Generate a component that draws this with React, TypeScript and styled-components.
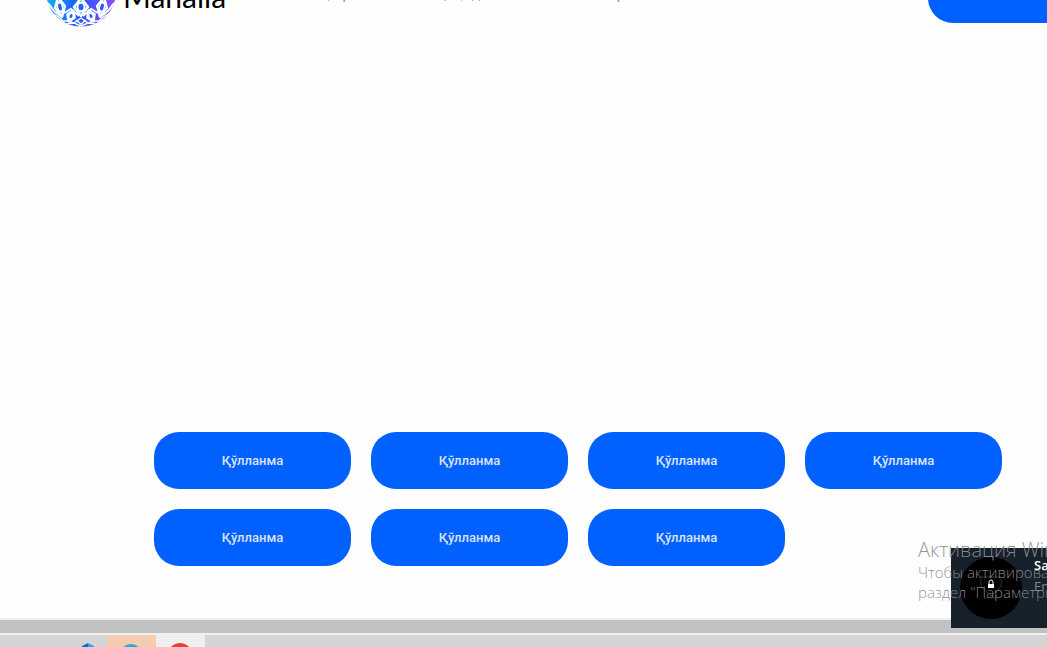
import React from "react";
import styled, { createGlobalStyle } from "styled-components";

const GlobalStyle = createGlobalStyle`
  * { box-sizing: border-box; }
  html, body { margin: 0; background: #fefefe; }
  body { font-family: Roboto, "Liberation Sans", sans-serif; }
`;

const Screen = styled.div`
  position: relative;
  min-height: 100vh;
  display: flex;
  flex-direction: column;
  overflow: hidden;
`;

const Header = styled.header`
  height: 27px;
  display: flex;
  align-items: flex-end;
  padding-left: 46px;
`;

const Brand = styled.a`
  display: flex;
  align-items: flex-end;
  gap: 7px;
  width: 224px;
  color: #000;
  text-decoration: none;
`;

const Wordmark = styled.span`
  font: 400 30px/40px Lato, sans-serif;
  padding-bottom: 11px;
`;

const Nav = styled.nav`
  flex: 1;
  display: flex;
  gap: 50px;
  padding-bottom: 25px;
`;

const NavLink = styled.a`
  font: 400 15px/20px "Open Sans", sans-serif;
  color: #888;
  text-decoration: none;
  white-space: nowrap;
`;

const PillButton = styled.button`
  height: 57px;
  border: 0;
  border-radius: 25px;
  background: #0061ff;
  color: #dbe3f8;
  font: 500 13px/20px Roboto, sans-serif;
`;

const LoginButton = styled(PillButton)`
  flex: none;
  width: 197px;
  margin: 0 -78px 4px 0;
`;

const Main = styled.main`
  flex: 1;
  display: flex;
  flex-direction: column;
  justify-content: flex-end;
  padding: 0 45px 52px 154px;
`;

const Guides = styled.div`
  display: grid;
  grid-template-columns: repeat(4, 1fr);
  gap: 20px;
`;

const ScrollTrack = styled.div`
  height: 17px;
  background: #c1c1c1;
  border: solid #f0f0f0;
  border-width: 2px 0;
`;

const Taskbar = styled.footer`
  height: 12px;
  display: flex;
  padding-left: 58px;
  background: #d5d5d5;
  overflow: hidden;
`;

const Task = styled.button<{ $tone?: string }>`
  width: 49px;
  height: 12px;
  padding: 0;
  border: 0;
  background: ${(p) => p.$tone ?? "transparent"};
  overflow: hidden;
  display: flex;
  justify-content: center;
`;

const Tray = styled(Task)`
  margin: 0 174px 0 auto;
`;

const Toast = styled.aside`
  position: absolute;
  right: 0;
  bottom: 19px;
  width: 96px;
  height: 80px;
  padding: 8px 0 8px 8px;
  display: flex;
  gap: 11px;
  background: #17212b;
  overflow: hidden;
`;

const ToastText = styled.div`
  flex: none;
  font: 400 13px/24px "Open Sans", sans-serif;
  color: #7d8791;
  white-space: nowrap;
`;

const Sender = styled.div`
  font-weight: 600;
  line-height: 18px;
  color: #fff;
`;

const Activation = styled.div`
  position: absolute;
  right: 0;
  bottom: 45px;
  width: 129px;
  overflow: hidden;
  white-space: nowrap;
  font: 300 15px/20px "Open Sans", sans-serif;
  color: rgba(142, 142, 142, 0.95);
`;

const ActivationTitle = styled.div`
  font-size: 20px;
  line-height: 24px;
`;

const Cell = ({ x, y, w, h, turn = 0 }: { x: number; y: number; w: number; h: number; turn?: number }) => (
  <g transform={`translate(${x} ${y}) rotate(${turn})`}>
    <path d={`M0 ${-h} L${w} 0 L0 ${h} L${-w} 0Z`} fill="url(#globe)" stroke="#fff" strokeWidth="2.4" strokeLinejoin="round" />
    <ellipse rx={w * 0.62} ry={h * 0.62} fill="#fff" />
    <ellipse rx={w * 0.36} ry={h * 0.36} fill="#2b5cff" />
  </g>
);

const Logo = () => (
  <svg width="70" height="70" viewBox="0 0 70 70" aria-hidden="true">
    <defs>
      <linearGradient id="globe" gradientUnits="userSpaceOnUse" x1="0" y1="35" x2="70" y2="43">
        <stop offset="0" stopColor="#12b8ff" />
        <stop offset="0.45" stopColor="#1d5cff" />
        <stop offset="1" stopColor="#8a4dff" />
      </linearGradient>
      <clipPath id="disc"><circle cx="35" cy="35" r="35" /></clipPath>
    </defs>
    <g clipPath="url(#disc)">
      <circle cx="35" cy="35" r="35" fill="url(#globe)" />
      <Cell x={14} y={50} w={5} h={10} turn={-12} />
      <Cell x={35} y={50} w={7} h={9} />
      <Cell x={56} y={50} w={5} h={10} turn={12} />
      <path
        d="M2 46 L8 54 L16 60 M68 46 L62 54 L54 60 M18 56 L25 52 L33 59 M52 56 L45 52 L37 59"
        stroke="#fff" strokeWidth="2" fill="none"
      />
      <Cell x={25} y={59} w={4} h={6} turn={24} />
      <Cell x={45} y={59} w={4} h={6} turn={-24} />
      <path
        d="M7 57 L13 60 L17 64 L22 64 L28 66 L35 61 L42 66 L48 64 L53 64 L57 60 L63 57 M14 63 L20 67 L28 66 L35 69 L42 66 L50 67 L56 63 M30 63 L35 67 L40 63"
        stroke="#fff" strokeWidth="1.4" fill="none"
      />
      <path d="M17 68 Q35 72 53 68" stroke="#fff" strokeWidth="2" strokeDasharray="2 1" fill="none" />
    </g>
  </svg>
);

const AvatarIcon = styled.svg`
  flex: none;
`;

const Avatar = () => (
  <AvatarIcon width="64" height="64" viewBox="0 0 64 64" aria-hidden="true">
    <circle cx="32" cy="32" r="31" fill="#000" />
    <path d="M22 23 Q20 31 27 35 L32 40 L37 35 Q44 31 42 23 M22 21h20" fill="none" stroke="#333" />
    <path d="M25 42h14" fill="none" stroke="#333" strokeDasharray="2 1" />
    <path d="M30 28v-2a2 2 0 0 1 4 0v2" fill="none" stroke="#fff" />
    <rect x="29" y="28" width="6" height="4" fill="#fff" />
  </AvatarIcon>
);

const App = () => (
  <Screen>
    <GlobalStyle />
    <Header>
      <Brand href="#">
        <Logo />
        <Wordmark>Mahalla</Wordmark>
      </Brand>
      <Nav>
        <NavLink href="#">Бош саҳифа</NavLink>
        <NavLink href="#">Биз ҳақида</NavLink>
        <NavLink href="#">Янгиликлар</NavLink>
      </Nav>
      <LoginButton type="button" aria-label="Кириш" />
    </Header>
    <Main>
      <Guides>
        {Array.from({ length: 7 }, (_, i) => (
          <PillButton type="button" key={i}>Қўлланма</PillButton>
        ))}
      </Guides>
    </Main>
    <ScrollTrack />
    <Taskbar>
      <Task type="button" aria-label="Code">
        <svg width="49" height="12" viewBox="0 0 49 12">
          <path d="M24 12 L24 11 L30 8 L30 12Z" fill="#0873bd" />
          <path d="M30 8 L36 11 L36 12 L30 12Z" fill="#29a9ec" />
        </svg>
      </Task>
      <Task type="button" aria-label="Telegram" $tone="#f4ccb0">
        <svg width="49" height="12" viewBox="0 0 49 12"><circle cx="24" cy="20" r="11" fill="#34a4dc" /></svg>
      </Task>
      <Task type="button" aria-label="Chrome" $tone="#efefef">
        <svg width="49" height="12" viewBox="0 0 49 12"><circle cx="24" cy="20" r="12" fill="#ea4031" /></svg>
      </Task>
      <Tray type="button" aria-label="Tray">
        <svg width="49" height="12" viewBox="0 0 49 12"><circle cx="24" cy="14" r="3" fill="#e8c558" /></svg>
      </Tray>
    </Taskbar>
    <Toast>
      <Avatar />
      <ToastText>
        <Sender>Sardor</Sender>
        <div>Endi</div>
      </ToastText>
    </Toast>
    <Activation>
      <ActivationTitle>Активация Windows</ActivationTitle>
      <div>Чтобы активировать Windows, перейдите в</div>
      <div>раздел "Параметры".</div>
    </Activation>
  </Screen>
);

export default App;
